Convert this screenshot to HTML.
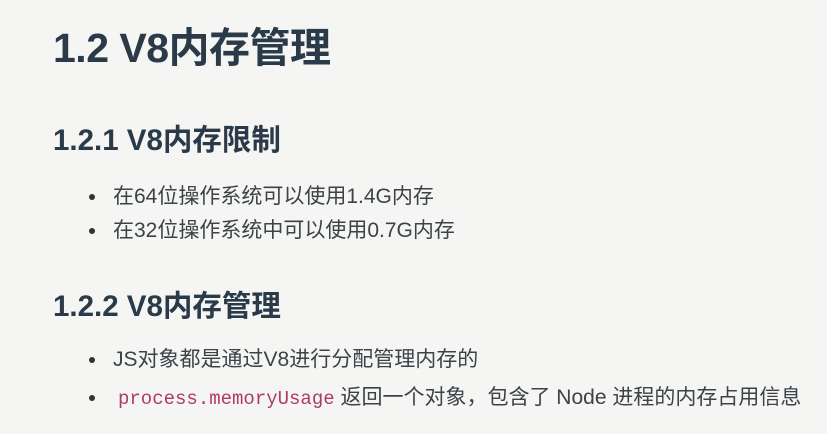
<!DOCTYPE html>
<html><head><meta charset="utf-8">
<style>
html,body{margin:0;padding:0;}
body{width:827px;height:434px;overflow:hidden;background:#f5f5f4;font-family:"Liberation Sans","Noto Sans CJK SC",sans-serif;position:relative;}
.h1{position:absolute;left:53px;top:24px;font-size:41px;font-weight:bold;color:#2a3a48;letter-spacing:-0.5px;line-height:48px;}
.h2{position:absolute;left:53px;font-size:29.5px;font-weight:bold;color:#2a3a48;line-height:34px;}
.li{position:absolute;left:113px;font-size:21px;color:#3c4348;line-height:28px;white-space:nowrap;}
.li:before{content:"";position:absolute;left:-24px;top:11px;width:6px;height:6px;border-radius:50%;background:#333;}
code{font-family:"Liberation Mono",monospace;color:#b03a67;font-size:19px;margin-left:5px;}
</style></head><body>
<div class="h1">1.2 V8内存管理</div>
<div class="h2" style="top:124px">1.2.1 V8内存限制</div>
<div class="li" style="top:183px">在64位操作系统可以使用1.4G内存</div>
<div class="li" style="top:217px">在32位操作系统中可以使用0.7G内存</div>
<div class="h2" style="top:290px">1.2.2 V8内存管理</div>
<div class="li" style="top:346px">JS对象都是通过V8进行分配管理内存的</div>
<div class="li" style="top:384px"><code>process.memoryUsage</code> 返回一个对象，包含了 Node 进程的内存占用信息</div>
</body></html>
